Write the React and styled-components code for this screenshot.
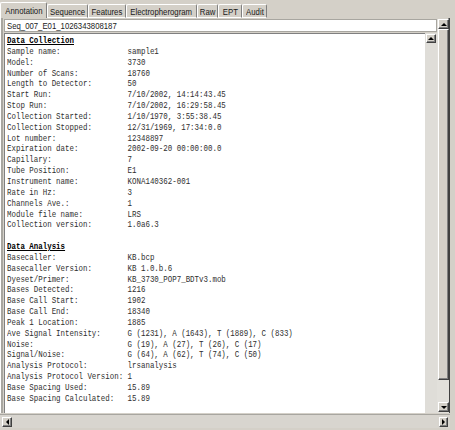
import React from "react";
import styled, { createGlobalStyle } from "styled-components";

const Global = createGlobalStyle`
  html, body { margin: 0; padding: 0; background: #d4d0c8; }
  body { width: 455px; height: 430px; overflow: hidden; }
`;

const SQUEEZE = 0.81;

const Frame = styled.div`
  width: 450px;
  height: 430px;
  box-sizing: border-box;
  display: flex;
  flex-direction: column;
  padding-top: 2px;
  padding-bottom: 2px;
`;

const TabStrip = styled.div`
  display: flex;
  align-items: flex-end;
  height: 16px;
  flex: none;
`;

const Tab = styled.div`
  box-sizing: border-box;
  width: ${(p) => p.$w}px;
  height: ${(p) => (p.$active ? 16 : 14)}px;
  display: flex;
  align-items: center;
  justify-content: center;
  background: #d4d0c8;
  border-top: 1px solid #ffffff;
  border-left: 1px solid #ffffff;
  border-right: 1px solid #808080;
  border-bottom: ${(p) => (p.$active ? "none" : "1px solid #ffffff")};
  border-radius: 2px 2px 0 0;
  position: relative;
  z-index: ${(p) => (p.$active ? 1 : 0)};
`;

const Label = styled.span`
  display: inline-block;
  font-family: "Liberation Sans", Arial, sans-serif;
  font-size: 9.6px;
  line-height: 11px;
  color: #1a1a1a;
  white-space: nowrap;
  transform: scaleX(${SQUEEZE});
  transform-origin: ${(p) => (p.$left ? "0 50%" : "50% 50%")};
  margin-top: ${(p) => (p.$active ? -1 : 0)}px;
`;

const Panel = styled.div`
  flex: 1;
  display: flex;
  min-height: 0;
  border-left: 1px solid #ffffff;
  border-right: 1px solid #404040;
  padding-left: 3px;
  padding-top: 1px;
  box-shadow: inset -1px 0 0 #808080, inset 2px 0 0 #a8a6a0;
`;

const MainColumn = styled.div`
  flex: 1;
  display: flex;
  flex-direction: column;
  gap: 1px;
  min-width: 0;
`;

const TitleField = styled.div`
  height: 13px;
  flex: none;
  box-sizing: border-box;
  background: #ffffff;
  border: 1px solid #a8a6a0;
  padding-left: 2px;
  display: flex;
  align-items: center;
  overflow: hidden;
`;

const TextRow = styled.div`
  flex: 1;
  display: flex;
  min-height: 0;
`;

const TextArea = styled.div`
  flex: 1;
  background: #ffffff;
  border-left: 1px solid #808080;
  border-top: 1px solid #808080;
  overflow: hidden;
  padding: 2px 0 0 2px;
`;

const Mono = styled.div`
  font-family: "Liberation Mono", "Courier New", monospace;
  font-size: 9.2px;
  line-height: 10.85px;
  color: #2e2e2e;
  transform: scaleX(${SQUEEZE});
  transform-origin: 0 0;
  width: 130%;
`;

const Row = styled.div`
  display: grid;
  grid-template-columns: 27ch auto;
  white-space: pre;
`;

const Heading = styled.div`
  font-weight: bold;
  color: #000;
  text-decoration: underline;
  margin-top: ${(p) => (p.$gap ? "10.85px" : "0")};
  white-space: pre;
`;

const ScrollColumn = styled.div`
  width: ${(p) => p.$w}px;
  flex: none;
  display: flex;
  flex-direction: column;
  background: ${(p) => p.$track};
  padding: ${(p) => p.$pad};
  box-sizing: border-box;
`;

const ArrowButton = styled.div`
  box-sizing: border-box;
  width: ${(p) => p.$w || 11}px;
  height: ${(p) => p.$h || 10}px;
  flex: none;
  background: #d4d0c8;
  border-top: 1px solid #ffffff;
  border-left: 1px solid #ffffff;
  border-right: 1px solid #404040;
  border-bottom: 1px solid #404040;
  box-shadow: inset -1px -1px 0 #808080;
  display: flex;
  align-items: center;
  justify-content: center;
`;

const Thumb = styled.div`
  box-sizing: border-box;
  height: ${(p) => p.$h}px;
  flex: none;
  background: #d4d0c8;
  border-top: 1px solid #ffffff;
  border-left: 1px solid #ffffff;
  border-right: 1px solid #404040;
  border-bottom: 1px solid #404040;
  box-shadow: inset -1px -1px 0 #808080;
`;

const Spacer = styled.div`
  flex: 1;
`;

const HScroll = styled.div`
  height: 13px;
  flex: none;
  margin-top: 1px;
  display: flex;
  align-items: center;
  padding: 0 2px 0 2px;
  border-top: 1px solid #a8a6a0;
  background: #d8d5cf;
`;

const Arrow = ({ dir }) => {
  const pts = {
    up: "0,4 3,1 6,4",
    down: "0,1 3,4 6,1",
    left: "4,0 1,3 4,6",
    right: "1,0 4,3 1,6",
  }[dir];
  const vertical = dir === "up" || dir === "down";
  return (
    <svg width={vertical ? 6 : 5} height={vertical ? 5 : 6} viewBox={vertical ? "0 0 6 5" : "0 0 5 6"}>
      <polygon points={pts} fill="#000" />
    </svg>
  );
};

const tabs = [
  { label: "Annotation", w: 47, active: true },
  { label: "Sequence", w: 41 },
  { label: "Features", w: 38 },
  { label: "Electropherogram", w: 71 },
  { label: "Raw", w: 21 },
  { label: "EPT", w: 24 },
  { label: "Audit", w: 25 },
];

const collection = [
  ["Sample name:", "sample1"],
  ["Model:", "3730"],
  ["Number of Scans:", "18760"],
  ["Length to Detector:", "50"],
  ["Start Run:", "7/10/2002, 14:14:43.45"],
  ["Stop Run:", "7/10/2002, 16:29:58.45"],
  ["Collection Started:", "1/10/1970, 3:55:38.45"],
  ["Collection Stopped:", "12/31/1969, 17:34:0.0"],
  ["Lot number:", "12348897"],
  ["Expiration date:", "2002-09-20 00:00:00.0"],
  ["Capillary:", "7"],
  ["Tube Position:", "E1"],
  ["Instrument name:", "KONA140362-001"],
  ["Rate in Hz:", "3"],
  ["Channels Ave.:", "1"],
  ["Module file name:", "LRS"],
  ["Collection version:", "1.0a6.3"],
];

const analysis = [
  ["Basecaller:", "KB.bcp"],
  ["Basecaller Version:", "KB 1.0.b.6"],
  ["Dyeset/Primer:", "KB_3730_POP7_BDTv3.mob"],
  ["Bases Detected:", "1216"],
  ["Base Call Start:", "1902"],
  ["Base Call End:", "18340"],
  ["Peak 1 Location:", "1885"],
  ["Ave Signal Intensity:", "G (1231), A (1643), T (1889), C (833)"],
  ["Noise:", "G (19), A (27), T (26), C (17)"],
  ["Signal/Noise:", "G (64), A (62), T (74), C (50)"],
  ["Analysis Protocol:", "lrsanalysis"],
  ["Analysis Protocol Version:", "1"],
  ["Base Spacing Used:", "15.89"],
  ["Base Spacing Calculated:", "15.89"],
];

const Rows = ({ items }) =>
  items.map(([k, v]) => (
    <Row key={k}>
      <span>{k}</span>
      <span>{v}</span>
    </Row>
  ));

export default function App() {
  return (
    <>
      <Global />
      <Frame>
        <TabStrip>
          {tabs.map((t) => (
            <Tab key={t.label} $w={t.w} $active={t.active}>
              <Label $active={t.active}>{t.label}</Label>
            </Tab>
          ))}
        </TabStrip>
        <Panel>
          <MainColumn>
            <TitleField>
              <Label $left>Seq_007_E01_1026343808187</Label>
            </TitleField>
            <TextRow>
              <TextArea>
                <Mono>
                  <Heading>Data Collection</Heading>
                  <Rows items={collection} />
                  <Heading $gap>Data Analysis</Heading>
                  <Rows items={analysis} />
                </Mono>
              </TextArea>
              <ScrollColumn $w={12} $track="#dfddd8" $pad="1px 1px 0 1px">
                <ArrowButton $w={10} $h={9}>
                  <Arrow dir="up" />
                </ArrowButton>
              </ScrollColumn>
            </TextRow>
          </MainColumn>
          <ScrollColumn $w={12} $track="#e2e0db" $pad="0 0 1px 1px">
            <ArrowButton>
              <Arrow dir="up" />
            </ArrowButton>
            <Thumb $h={351} />
            <Spacer />
            <ArrowButton>
              <Arrow dir="down" />
            </ArrowButton>
          </ScrollColumn>
        </Panel>
        <HScroll>
          <ArrowButton $w={10}>
            <Arrow dir="left" />
          </ArrowButton>
          <Spacer />
          <ArrowButton $w={9}>
            <Arrow dir="right" />
          </ArrowButton>
        </HScroll>
      </Frame>
    </>
  );
}
